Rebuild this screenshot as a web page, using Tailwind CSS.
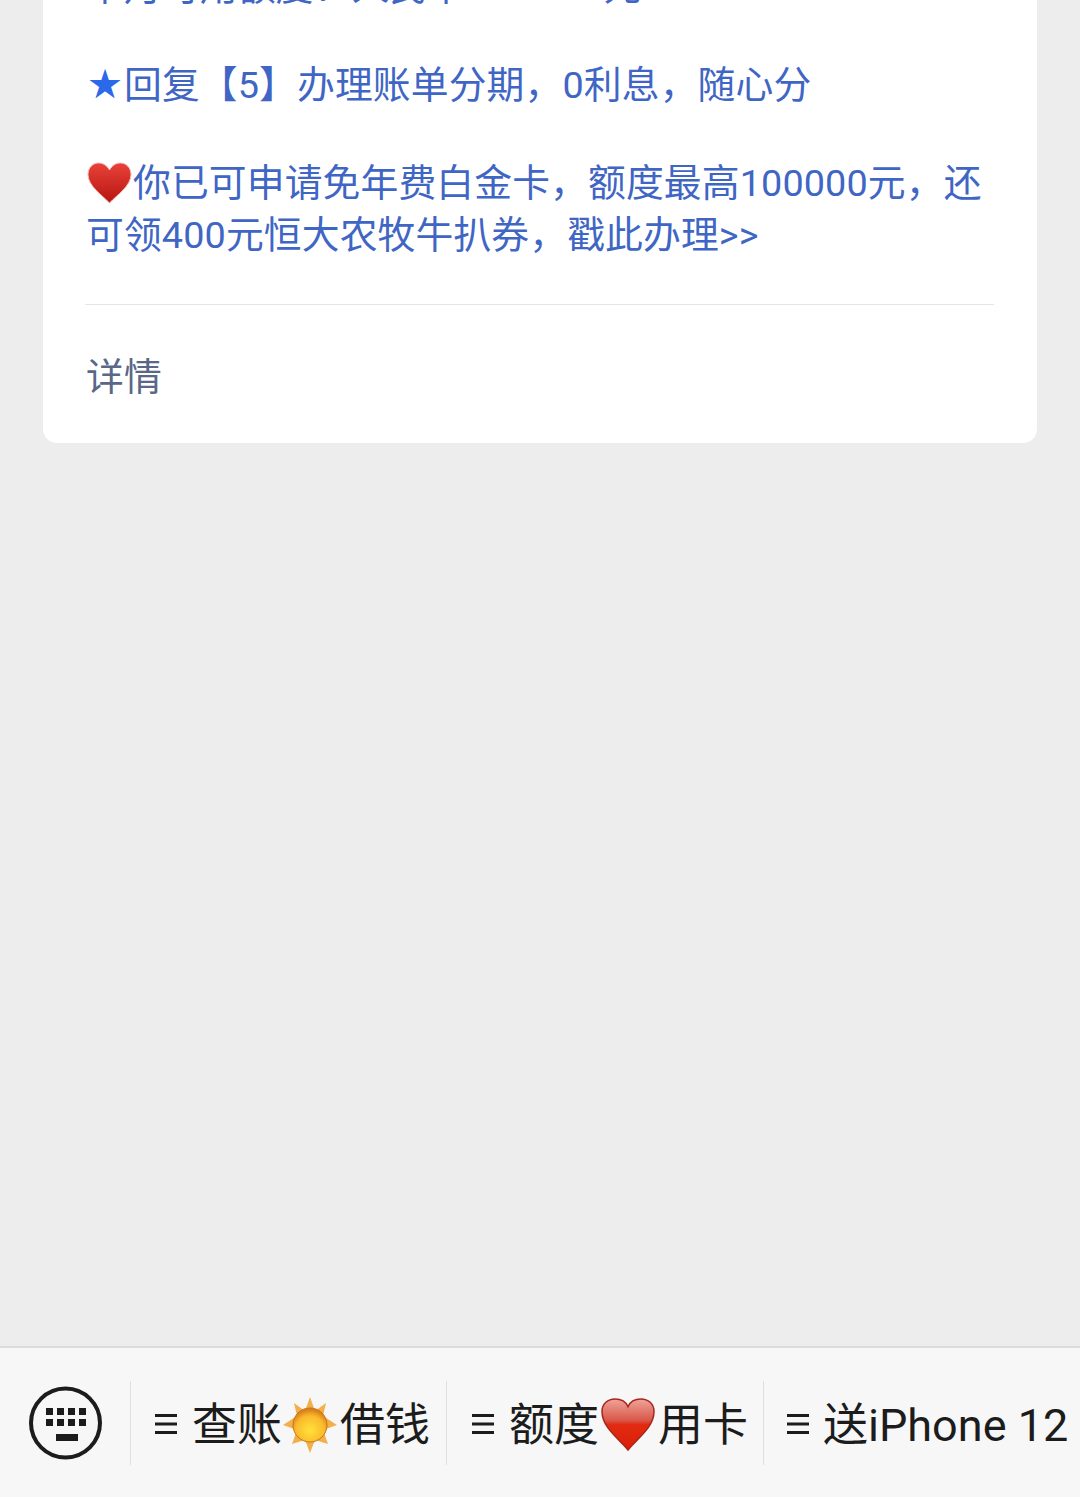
<!DOCTYPE html>
<html lang="zh-CN">
<head>
<meta charset="utf-8">
<script src="https://cdn.jsdelivr.net/npm/@tailwindcss/browser@4"></script>
</head>
<body class="m-0">
<div class="w-[1080px] h-[1497px] overflow-hidden flex flex-col bg-[#ededed] font-['Roboto','Noto_Sans_CJK_SC',sans-serif]">
  <main class="flex-1 min-h-0">
    <section class="mx-[43px] -mt-[39px] bg-white rounded-b-[14px] pl-[43px] pr-[43px] text-[37.8px] tracking-[0.12px] leading-[52px] text-[#3f66c4]">
      <p class="mb-[46px] whitespace-nowrap">本月可用额度：人民币9999.99元</p>
      <p class="mb-[46px] whitespace-nowrap flex items-center"><span class="w-[38px] text-center text-[33px] text-[#2b68ea]">★</span><span>回复【5】办理账单分期，0利息，随心分</span></p>
      <p class="w-[910px]"><svg class="inline-block align-[-8px] w-[45px] h-[42px] ml-px mr-px" viewBox="0 0 45 42"><defs><linearGradient id="h1" x1="0" y1="0" x2="0" y2="1"><stop offset="0" stop-color="#e9423a"/><stop offset="1" stop-color="#b5160f"/></linearGradient></defs><path d="M22.5 41C15 33 1 24 1 12.500C1 5.500 6 1 11.500 1C16 1 20 3.500 22.500 8C25 3.500 29 1 33.500 1C39 1 44 5.500 44 12.500C44 24 30 33 22.500 41Z" fill="url(#h1)" stroke="#f3c0b8" stroke-width="1"/></svg>你已可申请免年费白金卡，额度最高100000元，还可领400元恒大农牧牛扒券，戳此办理&gt;&gt;</p>
      <div class="mt-[43px] -ml-px h-px w-[909px] bg-[#e6e6e6]"></div>
      <div class="pt-[46px] pb-[40px] text-[#5a6788]">详情</div>
    </section>
  </main>
  <nav class="h-[151px] shrink-0 border-t-2 border-[#dcdcdc] bg-[#f7f7f7] flex items-center text-[#1c1c1c] text-[45px] leading-none">
    <div class="w-[131px] h-[84px] flex items-center justify-center border-r border-[#e0e0e0] pl-[2px]">
      <svg class="w-[74px] h-[74px]" viewBox="0 0 74 74" fill="#1c1c1c">
        <circle cx="36.500" cy="37" r="34.500" fill="none" stroke="#1c1c1c" stroke-width="4"/>
        <path d="M17 22h7v7h-7zM28 22h7v7h-7zM39 22h7v7h-7zM50 22h7v7h-7zM17 33h7v7h-7zM28 33h7v7h-7zM39 33h7v7h-7zM50 33h7v7h-7zM27 48h22v7H27z"/>
      </svg>
    </div>
    <div class="w-[316px] h-[84px] flex items-center border-r border-[#e0e0e0] pl-[23px] whitespace-nowrap">
      <svg class="w-[24px] h-[22px] mr-[14px] mt-[2px]" viewBox="0 0 24 22" fill="#1c1c1c"><path d="M1 1h22v3H1zM1 9.500h22v3H1zM1 18h22v3H1z"/></svg>
      <span class="mt-[6px]">查账</span>
      <svg class="w-[58px] h-[58px] -ml-[1px] mr-[1px] mt-[4px]" viewBox="0 0 58 58"><defs><radialGradient id="s1" cx=".5" cy=".65" r=".6"><stop offset="0" stop-color="#ffe23a"/><stop offset=".7" stop-color="#fbb92c"/><stop offset="1" stop-color="#d9801a"/></radialGradient></defs><path d="M29 1l5 14 11-8-3 13 14 9-14 5 5 14-13-4-5 13-5-13-13 4 5-14-14-5 14-9-3-13 11 8z" fill="#f2b04a"/><circle cx="29" cy="29" r="17" fill="url(#s1)" stroke="#c9741c" stroke-width="1"/></svg>
      <span class="mt-[6px]">借钱</span>
    </div>
    <div class="w-[317px] h-[84px] flex items-center border-r border-[#e0e0e0] pl-[24px] whitespace-nowrap">
      <svg class="w-[24px] h-[22px] mr-[14px] mt-[2px]" viewBox="0 0 24 22" fill="#1c1c1c"><path d="M1 1h22v3H1zM1 9.500h22v3H1zM1 18h22v3H1z"/></svg>
      <span class="mt-[6px]">额度</span>
      <svg class="w-[56px] h-[54px] ml-[1px] mr-[2px] mt-[3px]" viewBox="0 0 56 56" preserveAspectRatio="none"><defs><linearGradient id="h2" x1="0" y1="0" x2="0" y2="1"><stop offset="0" stop-color="#efa49a"/><stop offset=".42" stop-color="#d8574a"/><stop offset=".5" stop-color="#e32a12"/><stop offset="1" stop-color="#d81f08"/></linearGradient></defs><path d="M28 55C20 44 2 32 2 15C2 7 8 2 15 2C21 2 26 5 28 10C30 5 35 2 41 2C48 2 54 7 54 15C54 32 36 44 28 55Z" fill="url(#h2)" stroke="#a8261a" stroke-width="1.500"/></svg>
      <span class="mt-[6px]">用卡</span>
    </div>
    <div class="flex-1 h-[84px] flex items-center pl-[22px] whitespace-nowrap">
      <svg class="w-[24px] h-[22px] mr-[13px] mt-[2px]" viewBox="0 0 24 22" fill="#1c1c1c"><path d="M1 1h22v3H1zM1 9.500h22v3H1zM1 18h22v3H1z"/></svg>
      <span class="mt-[6px]">送iPhone 12</span>
    </div>
  </nav>
</div>
</body>
</html>
